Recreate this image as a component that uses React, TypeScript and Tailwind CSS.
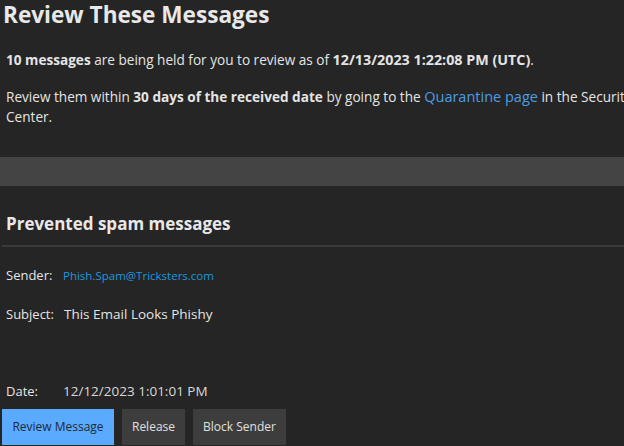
import React from 'react';

const font = { fontFamily: '"Open Sans", "Noto Sans", sans-serif' };

function Row({ label, children, className = '' }: { label: string; children: React.ReactNode; className?: string }) {
  return (
    <div className={`flex items-baseline leading-[21px] ${className}`}>
      <span className="w-[57px] shrink-0 text-[13px] text-[#e4e4e4]">{label}</span>
      {children}
    </div>
  );
}

export default function App() {
  return (
    <div className="w-[624px] h-[446px] overflow-hidden bg-[#252525]" style={font}>
      <div className="w-[660px]">
        <h1 className="pl-[3px] text-[22.6px] leading-[30px] font-bold text-[#e8e8e8]">Review These Messages</h1>

        <div className="pl-[6px] pt-[20px] text-[13.6px] leading-[20px] text-[#e4e4e4]">
          <p>
            <b>10 messages</b> are being held for you to review as of{' '}
            <b className="text-[14.3px]">12/13/2023 1:22:08 PM (UTC)</b>.
          </p>
          <p className="mt-[17px]">
            Review them within <b>30 days of the received date</b> by going to the{' '}
            <a className="text-[14.5px] text-[#4c9de6]">Quarantine page</a> in the Security Center.
          </p>
        </div>

        <div className="mt-[30px] h-[29px] bg-[#444444]" />

        <h2 className="pl-[6px] pt-[25px] text-[17px] leading-[26px] font-bold text-[#e8e8e8]">Prevented spam messages</h2>
        <div className="ml-[2px] mt-[8px] h-[2px] bg-[#3a3a3a]" />

        <div className="pl-[6px]">
          <Row label="Sender:" className="mt-[18px]">
            <a className="text-[11.5px] text-[#1b98dc]">Phish.Spam@Tricksters.com</a>
          </Row>
          <Row label="Subject:" className="mt-[18px]">
            <span className="pl-[1px] text-[13.5px] text-[#e4e4e4]">This Email Looks Phishy</span>
          </Row>
          <Row label="Date:" className="mt-[56px]">
            <span className="text-[13.5px] text-[#d8d8d8]">12/12/2023 1:01:01 PM</span>
          </Row>
        </div>

        <div className="mt-[7px] flex gap-[8px] pl-[2px] text-[12px]">
          <button className="h-[36px] w-[112px] bg-[#5aaaff] text-[#1e2a38]">Review Message</button>
          <button className="h-[36px] w-[63px] bg-[#3d3d3d] text-[#e0e0e0]">Release</button>
          <button className="h-[36px] w-[93px] bg-[#3d3d3d] text-[#e0e0e0]">Block Sender</button>
        </div>
      </div>
    </div>
  );
}
